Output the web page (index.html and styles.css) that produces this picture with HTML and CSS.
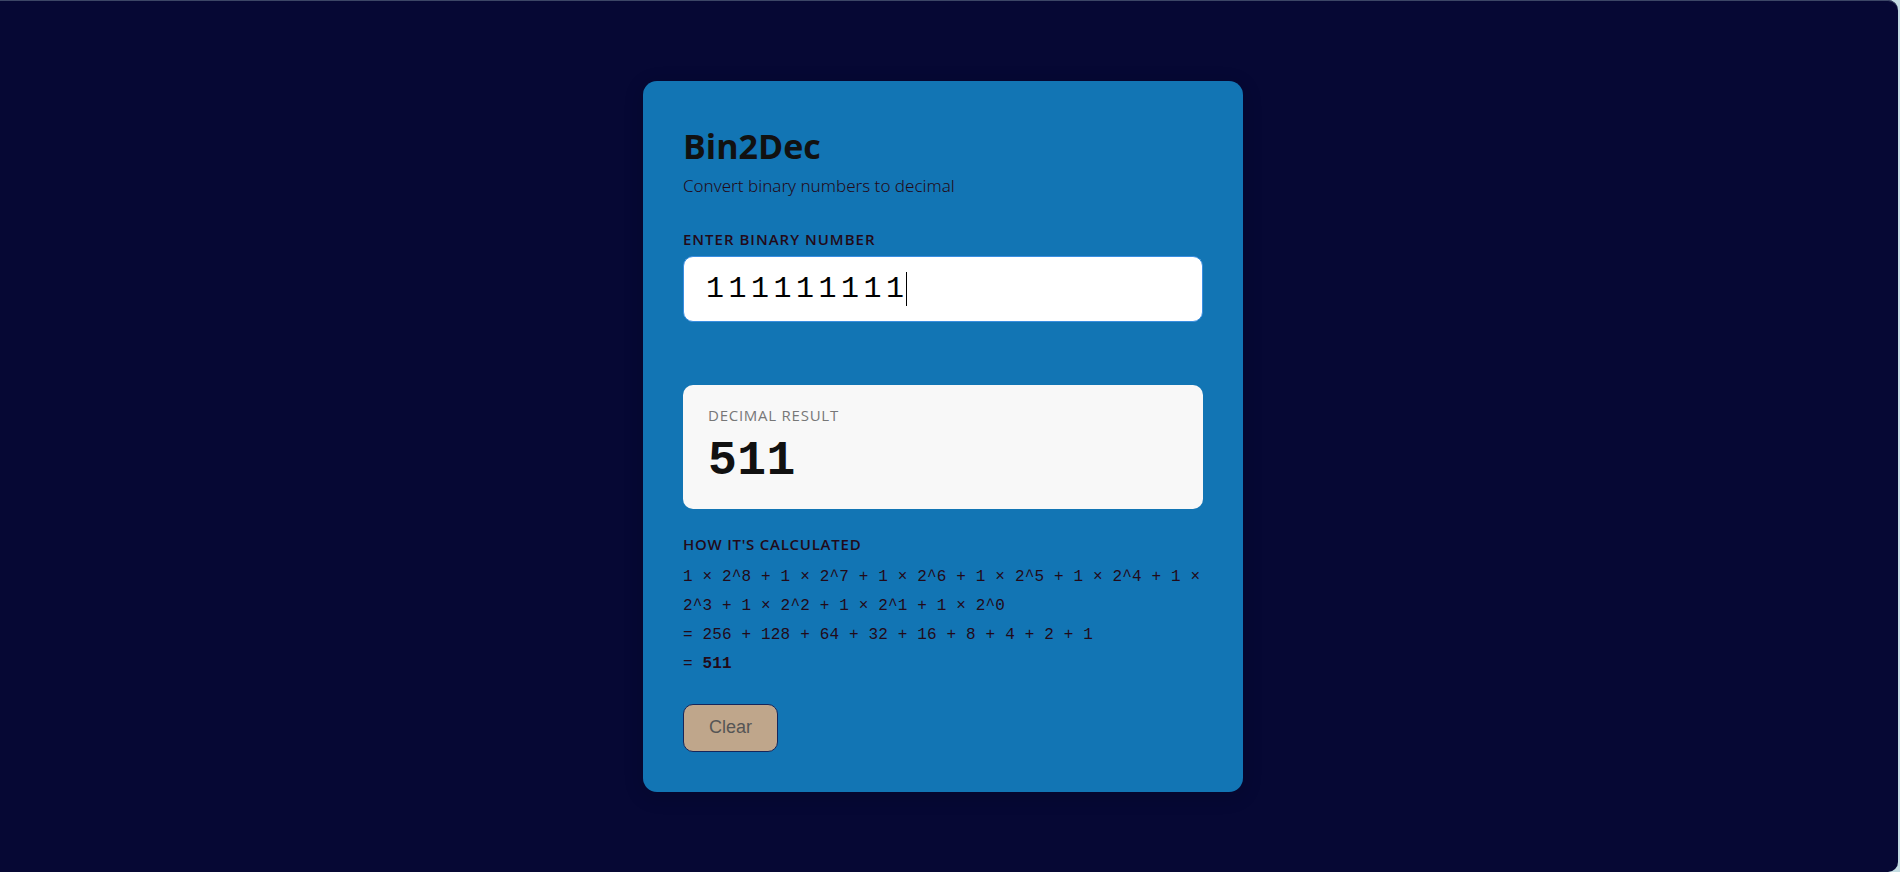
FILE: index.html
```html
<!DOCTYPE html>
<html lang="en">
<head>
<meta charset="utf-8">
<title>Bin2Dec</title>
<link rel="stylesheet" href="styles.css">
</head>
<body>
<div class="page">
  <main class="card">
    <header class="header">
      <h1 class="title">Bin2Dec</h1>
      <p class="subtitle">Convert binary numbers to decimal</p>
    </header>
    <div class="field">
      <label class="label" for="binary">Enter binary number</label>
      <div class="input-wrap">
        <input class="input" id="binary" type="text" value="111111111" autocomplete="off" spellcheck="false">
        <span class="caret"></span>
      </div>
    </div>
    <section class="result">
      <h2 class="result-label">Decimal result</h2>
      <output class="result-value" for="binary">511</output>
    </section>
    <section class="steps">
      <h2 class="label steps-label">How it's calculated</h2>
      <p class="step">1 × 2^8 + 1 × 2^7 + 1 × 2^6 + 1 × 2^5 + 1 × 2^4 + 1 × 2^3 + 1 × 2^2 + 1 × 2^1 + 1 × 2^0</p>
      <p class="step">= 256 + 128 + 64 + 32 + 16 + 8 + 4 + 2 + 1</p>
      <p class="step">= <strong>511</strong></p>
    </section>
    <button class="clear" type="button">Clear</button>
  </main>
</div>
</body>
</html>
```
FILE: styles.css
```css
* { box-sizing: border-box; }

body {
  margin: 0;
  background: #c5dde3;
  font-family: "Open Sans", "Noto Sans", sans-serif;
  color: #220a18;
}

h1, h2, p { margin: 0; }

.page {
  min-height: 100vh;
  margin-right: 2px;
  padding: 40px 12px 40px 0;
  display: flex;
  align-items: center;
  justify-content: center;
  background: #060834;
  border-radius: 0 10px 10px 0;
  box-shadow: inset 0 1px #3c4666;
}

.card {
  width: 100%;
  max-width: 600px;
  padding: 40px;
  background: #1275b4;
  border-radius: 14px;
  box-shadow: 0 4px 20px rgba(0, 0, 0, 0.15);
}

.header { margin-bottom: 29px; }

.title {
  font-size: 34px;
  line-height: 51px;
  font-weight: 700;
  color: #111;
}

.subtitle {
  font-family: "Noto Sans", sans-serif;
  font-size: 17px;
  line-height: 28px;
  font-weight: 300;
}

.label {
  display: block;
  font-size: 15px;
  line-height: 20px;
  font-weight: 600;
  letter-spacing: 1px;
  text-transform: uppercase;
}

.field .label { margin-bottom: 7px; }

.input-wrap { position: relative; }

.input {
  display: block;
  width: 100%;
  height: 66px;
  padding: 0 22px;
  border: 1px solid #3a8ee0;
  border-radius: 10px;
  background: #fff;
  color: #000;
  font-family: "Liberation Mono", monospace;
  font-size: 30px;
  letter-spacing: 0.15em;
}

.caret {
  position: absolute;
  left: 223px;
  top: 16px;
  width: 1px;
  height: 34px;
  background: #000;
}

.result {
  margin-top: 63px;
  padding: 20px 25px 16px;
  border-radius: 10px;
  background: #f8f8f8;
}

.result-label {
  margin-bottom: 4px;
  font-size: 15px;
  line-height: 20px;
  font-weight: 400;
  letter-spacing: 0.05em;
  text-transform: uppercase;
  color: #777;
}

.result-value {
  display: block;
  font-family: "Liberation Mono", monospace;
  font-size: 48px;
  line-height: 64px;
  font-weight: 700;
  letter-spacing: 0.01em;
  color: #111;
}

.steps { margin: 25px 0 25px; }

.steps-label {
  margin-bottom: 9px;
  letter-spacing: 0.05em;
}

.step {
  font-family: "Liberation Mono", monospace;
  font-size: 16px;
  line-height: 29px;
  letter-spacing: 0.01em;
}

.clear {
  display: block;
  height: 48px;
  padding: 0 25px;
  border: 1px solid #15265c;
  border-radius: 10px;
  background: #bfa68b;
  color: #555;
  font-family: "Liberation Sans", Arial, sans-serif;
  font-size: 18px;
}
```
